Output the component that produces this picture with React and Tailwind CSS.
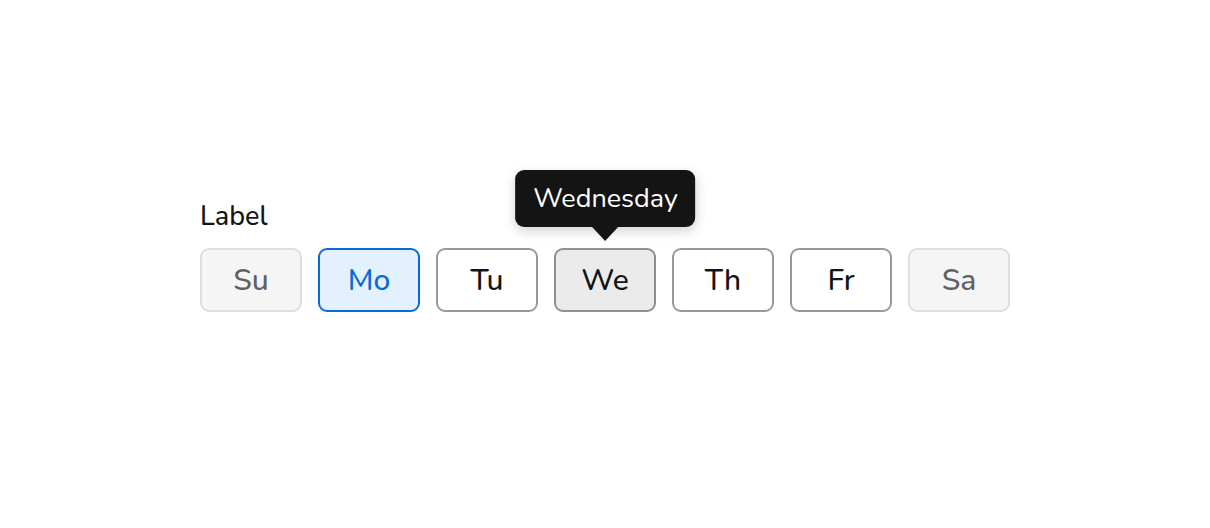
import React from 'react'

const days = [
  { short: 'Su', long: 'Sunday', state: 'disabled' },
  { short: 'Mo', long: 'Monday', state: 'selected' },
  { short: 'Tu', long: 'Tuesday', state: 'default' },
  { short: 'We', long: 'Wednesday', state: 'hover' },
  { short: 'Th', long: 'Thursday', state: 'default' },
  { short: 'Fr', long: 'Friday', state: 'default' },
  { short: 'Sa', long: 'Saturday', state: 'disabled' }
]

const stateClasses = {
  disabled: 'bg-[#f5f5f5] border-[#dedede] text-[#616161]',
  selected: 'bg-[#e3f1fe] border-[#0b68d8] text-[#0b68d8]',
  hover: 'bg-[#ebebeb] border-[#8f8f8f] text-[#141414]',
  default: 'bg-white border-[#999999] text-[#141414]'
}

function DayButton({ day }) {
  return (
    <div className="relative">
      {day.state === 'hover' && (
        <div className="absolute bottom-[85px] left-1/2 -translate-x-1/2 z-10">
          <div className="relative rounded-[9px] bg-[#141414] pl-[18px] pr-[17px] pt-[2px] h-[57px] flex items-center text-[27px] text-white whitespace-nowrap shadow-[0_4px_12px_rgba(0,0,0,0.18)]">
            {day.long}
            <div className="absolute left-1/2 -translate-x-1/2 top-full w-0 h-0 border-l-[13px] border-r-[13px] border-t-[14px] border-l-transparent border-r-transparent border-t-[#141414]" />
          </div>
        </div>
      )}
      <button
        disabled={day.state === 'disabled'}
        className={`w-[102px] h-[64px] rounded-[9px] border-2 flex items-center justify-center text-[30px] font-medium ${stateClasses[day.state]}`}
      >
        {day.short}
      </button>
    </div>
  )
}

export default function App() {
  return (
    <div className="w-[1210px] h-[528px] bg-white flex items-center justify-center font-['Nunito','Lato',sans-serif]">
      <div className="flex flex-col pb-[16px]">
        <div className="text-[27px] leading-[34px] font-medium text-[#141414] mb-[14px]">Label</div>
        <div className="flex gap-4">
          {days.map(d => <DayButton key={d.short} day={d} />)}
        </div>
      </div>
    </div>
  )
}
